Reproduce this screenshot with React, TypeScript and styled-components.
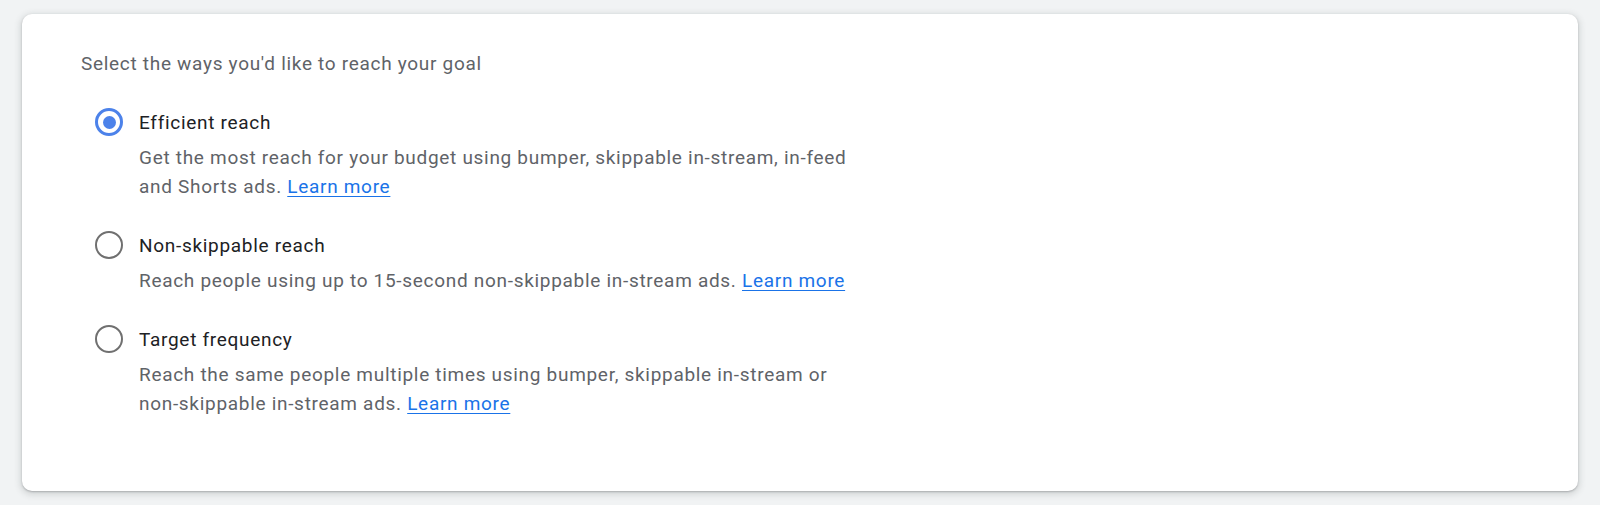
import React, { useState } from "react";
import styled, { createGlobalStyle } from "styled-components";

const GlobalStyle = createGlobalStyle`
  html, body {
    margin: 0;
    padding: 0;
    background: #f1f3f4;
    font-family: Roboto, "Noto Sans", Arial, sans-serif;
  }
  * { box-sizing: border-box; }
`;

const Page = styled.div`
  padding: 14px 22px 14px 22px;
  height: 505px;
`;

const Card = styled.section`
  background: #ffffff;
  border-radius: 10px;
  height: 477px;
  padding: 34.5px 59px 0 59px;
  box-shadow: 0 1px 2px rgba(60, 64, 67, 0.3), 0 2px 6px 2px rgba(60, 64, 67, 0.15);
`;

const Heading = styled.div`
  font-size: 19px;
  line-height: 29px;
  color: #5f6368;
  letter-spacing: 0.7px;
  margin-bottom: 30px;
`;

const OptionList = styled.div`
  display: flex;
  flex-direction: column;
  gap: 30px;
  padding-left: 14px;
`;

const Option = styled.label`
  display: grid;
  grid-template-columns: 28px 1fr;
  column-gap: 16px;
  row-gap: 6px;
  cursor: pointer;
`;

const Radio = styled.span<{ $checked: boolean }>`
  grid-row: 1;
  grid-column: 1;
  align-self: center;
  width: 28px;
  height: 28px;
  border-radius: 50%;
  border: ${(p) => (p.$checked ? "3px solid #4c82ea" : "2.5px solid #707070")};
  display: flex;
  align-items: center;
  justify-content: center;
  &::after {
    content: "";
    width: 13px;
    height: 13px;
    border-radius: 50%;
    background: #4c82ea;
    display: ${(p) => (p.$checked ? "block" : "none")};
  }
`;

const Title = styled.div`
  grid-row: 1;
  grid-column: 2;
  font-size: 19px;
  line-height: 29px;
  color: #202124;
  letter-spacing: 0.7px;
`;

const Desc = styled.div`
  grid-row: 2;
  grid-column: 2;
  font-size: 19px;
  line-height: 29px;
  color: #5f6368;
  letter-spacing: 0.7px;
  max-width: 722px;
`;

const Link = styled.a`
  color: #1a73e8;
  text-decoration: underline;
  text-underline-offset: 3px;
`;

const options = [
  {
    title: "Efficient reach",
    desc: "Get the most reach for your budget using bumper, skippable in-stream, in-feed and Shorts ads.",
  },
  {
    title: "Non-skippable reach",
    desc: "Reach people using up to 15-second non-skippable in-stream ads.",
  },
  {
    title: "Target frequency",
    desc: "Reach the same people multiple times using bumper, skippable in-stream or non\u2011skippable in-stream ads.",
  },
];

export default function App() {
  const [selected, setSelected] = useState(0);
  return (
    <Page>
      <GlobalStyle />
      <Card>
        <Heading>Select the ways you'd like to reach your goal</Heading>
        <OptionList>
          {options.map((o, i) => (
            <Option key={o.title} onClick={() => setSelected(i)}>
              <Radio $checked={selected === i} />
              <Title>{o.title}</Title>
              <Desc>
                {o.desc} <Link href="#">Learn more</Link>
              </Desc>
            </Option>
          ))}
        </OptionList>
      </Card>
    </Page>
  );
}
